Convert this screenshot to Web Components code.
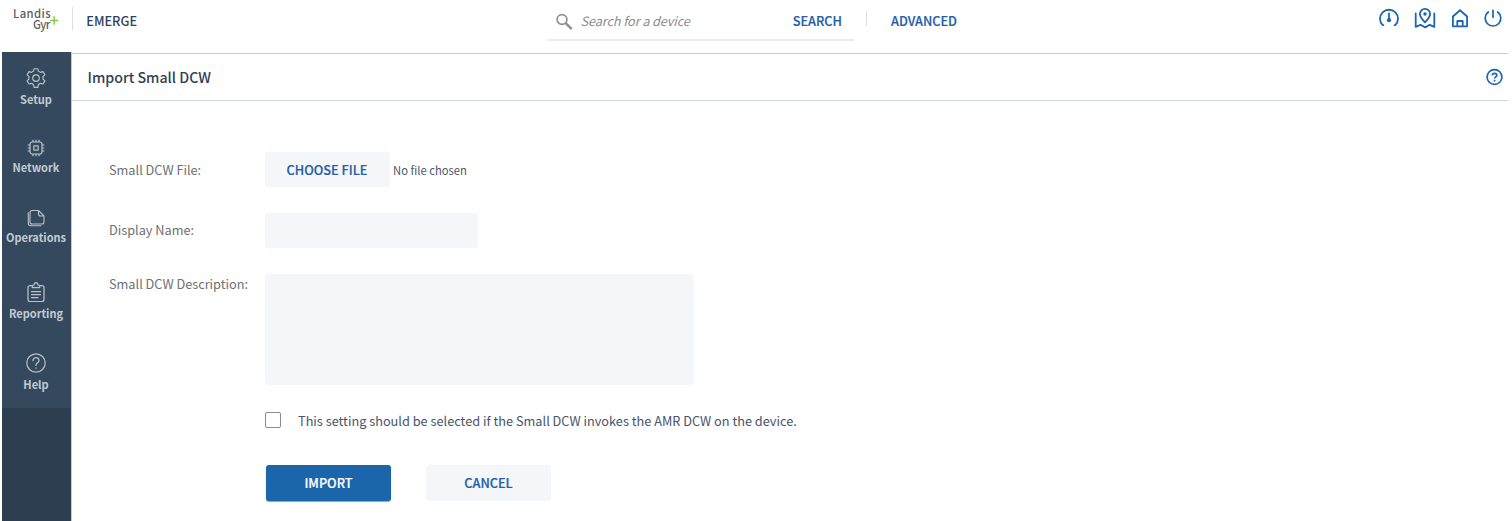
<!DOCTYPE html>
<html lang="en">
<head>
<meta charset="utf-8">
<title>EMERGE - Import Small DCW</title>
<style>
html,body{margin:0;height:100%;overflow:hidden;background:#fff}
body{font-family:"Noto Sans CJK SC","Open Sans",sans-serif;font-size:12.720px;color:#475468}
</style>
</head>
<body>
<emerge-app></emerge-app>
<script>
const define = (name, html, setup) => customElements.define(name, class extends HTMLElement {
  connectedCallback() {
    if (this.shadowRoot) return;
    const t = document.createElement('template');
    t.innerHTML = html;
    this.attachShadow({mode: 'open'}).append(t.content.cloneNode(true));
    if (setup) setup(this, this.shadowRoot);
  }
});

const icons = {
  gear: ['20 20', '<g fill="none" stroke="#b9c2ca" stroke-width="1.05" stroke-linejoin="round" transform="translate(-1 -.9) scale(1.1)"><path d="M8.300 1.500h3.400l.5 2.300c.7.2 1.300.6 1.900 1l2.300-.7 1.700 2.900-1.800 1.700c.1.6.1 1.400 0 2.100l1.800 1.700-1.700 2.900-2.300-.7c-.6.5-1.200.8-1.900 1.100l-.5 2.700H8.300l-.6-2.700c-.7-.3-1.300-.6-1.800-1.100l-2.300.7L1.900 12.500l1.700-1.700c-.1-.7-.1-1.500 0-2.100L1.900 7l1.700-2.900 2.300.7c.5-.4 1.100-.8 1.800-1z"/><circle cx="10" cy="10" r="3"/></g>'],
  chip: ['20 20', '<g fill="none" stroke="#b9c2ca" stroke-width="1.200"><rect x="4" y="4" width="12" height="12" rx="2.200"/><rect x="7.800" y="7.800" width="4.400" height="4.400" rx=".4"/><path d="M7 1.700V4M10 1.700V4M13 1.700V4M7 16v2.300M10 16v2.300M13 16v2.300M1.700 7H4M1.700 10H4M1.700 13H4M16 7h2.300M16 10h2.300M16 13h2.300"/></g>'],
  pages: ['20 20', '<g fill="none" stroke="#b9c2ca" stroke-width="1.100" stroke-linejoin="round" stroke-linecap="round"><path d="M12.500 2.500H6a2 2 0 0 0-2 2v9.500a2 2 0 0 0 2 2h10a2 2 0 0 0 2-2V8zM12.500 2.500V6a2 2 0 0 0 2 2H18"/><path d="M2.300 4.500v10.800a2.400 2.400 0 0 0 2.400 2.400H15"/></g>'],
  clipboard: ['20 20', '<g fill="none" stroke="#b9c2ca" stroke-width="1.250" stroke-linecap="round" stroke-linejoin="round"><path d="M6.300 3.500H4a2 2 0 0 0-2 2v12a2 2 0 0 0 2 2h12a2 2 0 0 0 2-2v-12a2 2 0 0 0-2-2h-2.300"/><path d="M6.300 5.500v-1c0-1 .7-1.500 1.700-1.600C8.200 1.500 9 .6 10 .6s1.800.9 2 2.300c1 .1 1.700.6 1.700 1.600v1z"/><path d="M5.500 9.500h9M5.500 12.500h9M5.500 15.500h6.500"/></g>'],
  help: ['20 20', '<g fill="none" stroke="#b9c2ca" stroke-width="1.200" stroke-linecap="round"><circle cx="10" cy="10" r="9.200"/><path d="M7 7.700c0-1.800 1.300-3 3-3s3 1.200 3 2.800c0 2.300-3 2.300-3 4.500v.5"/><path d="M10 14.900v.3"/></g>'],
  search: ['18 18', '<circle cx="6" cy="6.500" r="4.900" fill="none" stroke="#8f8f8f" stroke-width="1.700"/><path d="m9.700 10.200 6 6" stroke="#8f8f8f" stroke-width="2.400"/>'],
  gauge: ['22 22', '<g fill="none" stroke="#1b66ae" stroke-width="1.800" stroke-linecap="round" stroke-linejoin="round"><path d="M5.400 18.200H4.700A9 9 0 1 1 17.300 18.200H16.600"/><path d="M11 6.500v6"/></g><circle cx="11" cy="13.200" r="2.100" fill="#1b66ae"/>'],
  map: ['22 22', '<g fill="none" stroke="#1b66ae" stroke-width="1.800" stroke-linejoin="round" stroke-linecap="round"><path d="M11 15.300C8 12.300 5.900 10 5.900 7a5.100 5.100 0 0 1 10.200 0c0 3-2.100 5.300-5.100 8.300z"/><path d="M1.700 6.500v13.300l4.800-2 4.700 2.600 4.500-2.600 4.600 2V6.500"/></g><circle cx="11" cy="7" r="1.700" fill="#1b66ae"/>'],
  home: ['22 22', '<g fill="none" stroke="#1b66ae" stroke-width="1.800" stroke-linejoin="round"><path d="M3.900 9.500 11 3.300l7.100 6.200V19.300H3.900z"/><path d="M8.300 19v-5h5.400v5"/></g>'],
  power: ['22 22', '<g fill="none" stroke="#1b66ae" stroke-width="1.700" stroke-linecap="round"><path d="M6.300 5a7.800 7.800 0 1 0 9.400 0"/><path d="M11 3.300v7"/></g>'],
  info: ['18 18', '<g fill="none" stroke="#1b66ae" stroke-width="1.700"><circle cx="8.500" cy="9" r="7.400"/><path d="M6.200 7.400c.1-1.300 1-2 2.300-2s2.300.8 2.300 1.900c0 1.600-2.200 1.600-2.200 3.300"/><path d="M7.700 12.600h1.700"/></g>']
};

define('ui-icon', '<style>:host{display:block;flex:none}svg{display:block}</style><div></div>', (host, root) => {
  const icon = icons[host.getAttribute('name')];
  if (!icon) return;
  const [w, h] = icon[0].split(' ');
  root.querySelector('div').innerHTML = `<svg width="${w}" height="${h}" viewBox="0 0 ${icon[0]}">${icon[1]}</svg>`;
});

define('brand-logo', `<style>
:host{display:block;flex:none;position:relative;width:70px;height:52px;font-family:"Noto Sans CJK SC",sans-serif;font-weight:500;color:#5d5f62;font-size:11.300px;line-height:11px}
.name{padding:8px 0 0 13px;letter-spacing:.4px}
.second{padding:0 0 0 33px;letter-spacing:-.7px}
svg{position:absolute;left:49.500px;top:16px}
</style><div class="name">Landis</div><div class="second">Gyr</div>
<svg width="9" height="9" viewBox="0 0 9 9"><path d="M4.200.3v8.400M.2 4.500h8" stroke="#86cb45" stroke-width="1.500"/></svg>`);

define('search-bar', `<style>
:host{display:flex;box-sizing:border-box;width:307px;height:41px;border-bottom:2px solid #ededed;padding-left:8.500px}
ui-icon{margin-top:13px}
i{margin:11px 0 0 7px;line-height:20px;color:#8d8d8d;letter-spacing:-.11px;white-space:nowrap}
b{margin:11px 12px 0 auto;line-height:20px;font-weight:500;color:#235fa8;-webkit-text-stroke:.2px #235fa8}
</style><ui-icon name="search"></ui-icon><i>Search for a device</i><b>SEARCH</b>`);

define('app-header', `<style>
:host{display:flex;height:53px;width:1508px;color:#2e4160}
.bar{width:1px;background:#dcdfe2;margin:7px 0 23px 2px}
.title{width:461px;padding:11px 0 0 13.300px;box-sizing:border-box;font-weight:500;line-height:20px}
search-bar{margin-left:13px}
.sep{width:1px;background:#dcdcdc;margin:11px 24px 27px 12px}
.adv{font-weight:500;color:#235fa8;line-height:20px;margin-top:11px;-webkit-text-stroke:.2px #235fa8}
nav{display:flex;margin-left:auto;padding:7px 4px 0 0}
</style><brand-logo></brand-logo><div class="bar"></div><div class="title">EMERGE</div><search-bar></search-bar>
<div class="sep"></div><div class="adv">ADVANCED</div>
<nav><ui-icon name="gauge"></ui-icon><ui-icon name="map" style="margin-left:14px"></ui-icon><ui-icon name="home" style="margin-left:13px"></ui-icon><ui-icon name="power" style="margin-left:11px"></ui-icon></nav>`);

define('side-item', `<style>
:host{display:flex;flex-direction:column;align-items:center;gap:var(--gap,3px);font-size:11px;font-weight:700;line-height:16px;color:#c3cbd0}
</style><ui-icon></ui-icon><span><slot></slot></span>`, (host, root) => {
  const i = document.createElement('ui-icon');
  i.setAttribute('name', host.getAttribute('icon'));
  root.querySelector('ui-icon').replaceWith(i);
});

define('side-nav', `<style>
:host{display:block;flex:none;width:69px;margin:-1px 0 0 2px;background:#2c3e50;border-right:1px solid #c4cbd2}
nav{height:356px;background:#34495e;box-sizing:border-box;padding:16px 1px 0 0}
</style><nav>
<side-item icon="gear">Setup</side-item>
<side-item icon="chip" style="margin-top:31px;--gap:1px">Network</side-item>
<side-item icon="pages" style="margin-top:33px;--gap:1px">Operations</side-item>
<side-item icon="clipboard" style="margin-top:37px">Reporting</side-item>
<side-item icon="help" style="margin-top:32px;--gap:3px">Help</side-item>
</nav>`);

define('page-title', `<style>
:host{display:flex;height:46px;border-top:1px solid #cbced0;border-bottom:1px solid #d0d5da;justify-content:space-between;padding:0 4.500px 0 15.500px}
h1{margin:13px 0 0;font-size:14.180px;line-height:20px;font-weight:500;color:#2f3f57}
ui-icon{margin-top:14px}
</style><h1><slot></slot></h1><ui-icon name="info"></ui-icon>`);

define('ui-button', `<style>
:host{display:block;flex:none;width:125px;height:35.500px;border-radius:3px;background:#f5f6fa;color:#235fa8;font-weight:500;text-align:center;line-height:35px;-webkit-text-stroke:.2px currentColor}
:host([primary]){background:#1b66ab;color:#fff;box-shadow:0 1px 1px #7fa6cb}
</style><slot></slot>`);

define('form-row', `<style>
:host{display:grid;grid-template-columns:155.500px auto;justify-content:start;align-items:start}
label{line-height:20px;padding-top:var(--lt,8px);color:#6e7073;white-space:nowrap}
</style><label></label><div><slot></slot></div>`, (host, root) => {
  root.querySelector('label').textContent = host.getAttribute('label') || '';
});

define('ui-field', `<style>
:host{display:block;background:#f5f6fa;border-radius:3px}
</style>`);

define('import-form', `<style>
:host{display:block;padding:51px 0 0 37px}
.file{display:flex}
.file ui-button{width:125px;height:35px}
.file span{font-size:11.260px;line-height:20px;margin:8px 0 0 3.500px;color:#4d5665}
.check{display:flex;align-items:flex-start;height:16px}
.box{box-sizing:border-box;width:16px;height:16px;border:1px solid #8b8b8b;border-radius:2px}
.check span{line-height:20px;margin:-1px 0 0 17.500px;white-space:nowrap;letter-spacing:.01px}
.actions{display:flex;gap:35px;padding-left:1.500px}
</style>
<form-row label="Small DCW File:"><div class="file"><ui-button>CHOOSE FILE</ui-button><span>No file chosen</span></div></form-row>
<form-row label="Display Name:" style="margin-top:26px;--lt:7px"><ui-field style="width:213.500px;height:35px"></ui-field></form-row>
<form-row label="Small DCW Description:" style="margin-top:26px;--lt:0px"><ui-field style="width:429.500px;height:111px"></ui-field></form-row>
<form-row style="margin-top:27px;--lt:0px"><div class="check"><div class="box"></div><span>This setting should be selected if the Small DCW invokes the AMR DCW on the device.</span></div></form-row>
<form-row style="margin-top:37px;--lt:0px"><div class="actions"><ui-button primary>IMPORT</ui-button><ui-button>CANCEL</ui-button></div></form-row>`);

define('emerge-app', `<style>
:host{display:flex;flex-direction:column;height:521px;width:1512px;background:#fff}
.body{display:flex;flex:1;width:1508px}
main{flex:1;min-width:0}
</style><app-header></app-header><div class="body"><side-nav></side-nav><main><page-title>Import Small DCW</page-title><import-form></import-form></main></div>`);
</script>
</body>
</html>
